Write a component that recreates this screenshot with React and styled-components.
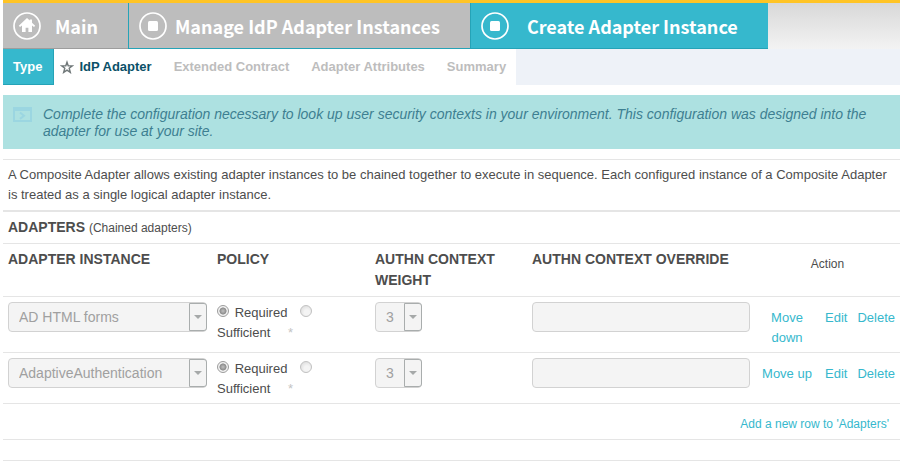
import { useState } from "react";
import styled, { createGlobalStyle } from "styled-components";

const GlobalStyle = createGlobalStyle`
  * {
    box-sizing: border-box;
  }

  body {
    margin: 0;
    background: #fff;
    color: #4d4d4d;
    font-family: "Liberation Sans", Arial, sans-serif;
    font-size: 13px;
    line-height: 20px;
  }

  a {
    color: #36b8cd;
    text-decoration: none;
  }
`;

const Page = styled.div`
  padding: 0 4px 0 3px;
`;

const Header = styled.header`
  border-top: 3px solid #ffc425;
`;

const MainNav = styled.nav`
  display: flex;
  height: 46px;
  background: linear-gradient(#d8d8d8, #f3f3f3);
`;

const MainTab = styled.a`
  display: flex;
  align-items: center;
  gap: ${(p) => p.$gap};
  padding: 0 30px 0 10px;
  border-left: ${(p) => (p.$first ? "0" : "1px solid #25a3b7")};
  border-bottom: 1px solid ${(p) => (p.$first ? "#9d9d9d" : "#25a3b7")};
  background: ${(p) => (p.$active ? "#36b8cd" : "#bdbdbd")};
  color: #fff;
  font-family: "Noto Sans CJK SC", "Open Sans", sans-serif;
  font-size: 18px;
  font-weight: 700;
  white-space: nowrap;

  svg {
    flex: none;
  }
`;

const TaskBar = styled.div`
  display: flex;
  background: #eef2f8;
`;

const TaskNav = styled.nav`
  display: flex;
  align-items: stretch;
  height: 36px;
  padding-right: 10px;
  gap: 22px;
  background: #fff;
  font-weight: 700;
`;

const Task = styled.a`
  display: flex;
  align-items: center;
  gap: 5px;
  color: ${(p) => (p.$current ? "#0a5068" : "#bdbdbd")};
`;

const DoneTask = styled(Task)`
  margin-right: -16px;
  padding: 0 11px 0 10px;
  border-right: 1px solid #25a3b7;
  border-bottom: 1px solid #25a3b7;
  background: #36b8cd;
  color: #fff;
`;

const Notice = styled.div`
  display: flex;
  gap: 11px;
  margin: 10px 0;
  padding: 11px 10px 9px;
  background: #ade1e1;
  color: #3d7f91;
  font-size: 14px;
  font-style: italic;
  line-height: 17px;

  svg {
    flex: none;
    margin-top: 1px;
  }
`;

const Intro = styled.p`
  margin: 0;
  padding: 5px;
  border-top: 1px solid #e5e5e5;
  border-bottom: 2px solid #e5e5e5;
`;

const SectionTitle = styled.h2`
  margin: 0;
  padding: 5px;
  border-bottom: 1px solid #e5e5e5;
  font-size: 14px;
  line-height: 20px;

  small {
    font-size: 12px;
    font-weight: 400;
  }
`;

const Table = styled.table`
  width: 100%;
  border-collapse: collapse;
  table-layout: fixed;
`;

const Row = styled.tr`
  border-bottom: 1px solid #e5e5e5;
`;

const HeadCell = styled.th`
  width: ${(p) => p.$width};
  padding: 5px;
  font-size: 14px;
  line-height: 21px;
  text-align: left;
  vertical-align: top;
`;

const ActionHead = styled(HeadCell)`
  padding-top: 10px;
  font-size: 12px;
  font-weight: 400;
  text-align: center;
`;

const Cell = styled.td`
  padding: 5px;
  vertical-align: top;
`;

const ActionCell = styled(Cell)`
  padding: 11px 5px 4px 0;
`;

const Actions = styled.div`
  display: flex;
  gap: 10px;
  text-align: center;

  a:first-child {
    flex: 1;
    padding-left: 4px;
  }
`;

const SelectBox = styled.span`
  display: block;
  position: relative;
  width: ${(p) => p.$width};
`;

const Select = styled.select`
  display: block;
  appearance: none;
  width: 100%;
  height: 30px;
  padding: 0 18px 0 10px;
  border: 1px solid #d2d2d2;
  border-radius: 4px;
  background: #f4f4f4;
  color: #a0a0a0;
  font: inherit;
  font-size: 14px;
  opacity: 1;
`;

const SelectArrow = styled.span`
  display: flex;
  position: absolute;
  top: 1px;
  right: 0;
  bottom: 1px;
  width: 18px;
  align-items: center;
  justify-content: center;
  border: 1px solid #a9adad;
  border-radius: 0 3px 3px 0;
  background: #f4f4f4;
  pointer-events: none;
`;

const TextInput = styled.input`
  display: block;
  width: 100%;
  height: 30px;
  padding: 0 10px;
  border: 1px solid #d2d2d2;
  border-radius: 4px;
  background: #f4f4f4;
  font: inherit;
`;

const Radio = styled.input`
  appearance: none;
  width: 12px;
  height: 12px;
  margin: 0 2px 0 0;
  border: 1px solid #c2c2c2;
  border-radius: 50%;
  background: radial-gradient(circle at 60% 65%, #f4f4f4 30%, #d6d6d6);

  &:checked {
    border-color: #9c9c9c;
    background: radial-gradient(circle, #b4b4b4 10%, #8c8c8c 45%, #f2f2f2 55%);
  }
`;

const RadioLabel = styled.label`
  margin-right: 9px;
`;

const RequiredMark = styled.span`
  margin-left: 5px;
  color: #c4c4c4;
`;

const PolicyCell = styled(Cell)`
  padding: 6px 5px 4px;
`;

const AddRow = styled.div`
  padding: 10px 11px 5px;
  border-bottom: 1px solid #e5e5e5;
  font-size: 12px;
  text-align: right;
`;

const Footer = styled.div`
  height: 21px;
  border-bottom: 1px solid #e5e5e5;
`;

const HomeIcon = () => (
  <svg width="28" height="28" viewBox="0 0 28 28" aria-hidden="true">
    <circle cx="14" cy="14" r="13" fill="none" stroke="#fff" strokeWidth="1.7" />
    <path d="M14 6 5.8 13.8 7 15l2-1.4V20h3.6v-4.2h2.8V20H19v-6.4l2 1.4 1.2-1.2-3.2-3V7.4h-2.2v1.2z" fill="#fff" />
  </svg>
);

const StopIcon = () => (
  <svg width="28" height="28" viewBox="0 0 28 28" aria-hidden="true">
    <circle cx="14" cy="14" r="13" fill="none" stroke="#fff" strokeWidth="1.7" />
    <rect x="9" y="9" width="10" height="10" rx="1.5" fill="#fff" />
  </svg>
);

const StarIcon = () => (
  <svg width="14" height="14" viewBox="0 0 14 14" aria-hidden="true">
    <path d="M7 2.2 8.2 5.8l4.2.1-3.2 2.4 1.1 4L7 10.1l-3.3 2.2 1.1-4-3.2-2.4 4.2-.1z" fill="none" stroke="#6f7778" strokeWidth="1.4" />
  </svg>
);

const WindowIcon = () => (
  <svg width="19" height="15" viewBox="0 0 19 15" aria-hidden="true">
    <path d="M1 1h17v13H1zM1 3h17" fill="none" stroke="#9bd6e1" strokeWidth="2" />
    <path d="m7 5.5 4 3.2-4 3.2" fill="none" stroke="#9bd6e1" strokeWidth="2" />
  </svg>
);

const Caret = () => (
  <svg width="8" height="4" viewBox="0 0 8 4" aria-hidden="true">
    <path d="M0 0h8L4 4z" fill="#a6a9a9" />
  </svg>
);

const Dropdown = ({ label, value, width }) => (
  <SelectBox $width={width}>
    <Select aria-label={label} defaultValue={value} disabled>
      <option>{value}</option>
    </Select>
    <SelectArrow>
      <Caret />
    </SelectArrow>
  </SelectBox>
);

const initialAdapters = [
  { id: "forms", name: "AD HTML forms", weight: "3", move: "Move down" },
  { id: "adaptive", name: "AdaptiveAuthentication", weight: "3", move: "Move up" },
];

const AdapterRow = ({ adapter }) => {
  const { id, name, weight, move } = adapter;

  return (
    <Row>
      <Cell>
        <Dropdown label="Adapter instance" value={name} width="199px" />
      </Cell>
      <PolicyCell>
        <Radio type="radio" id={`${id}-required`} name={`${id}-policy`} defaultChecked disabled />{" "}
        <RadioLabel htmlFor={`${id}-required`}>Required</RadioLabel>{" "}
        <Radio type="radio" id={`${id}-sufficient`} name={`${id}-policy`} disabled />{" "}
        <RadioLabel htmlFor={`${id}-sufficient`}>Sufficient</RadioLabel>{" "}
        <RequiredMark>*</RequiredMark>
      </PolicyCell>
      <Cell>
        <Dropdown label="AuthN context weight" value={weight} width="47px" />
      </Cell>
      <Cell>
        <TextInput type="text" aria-label="AuthN context override" disabled />
      </Cell>
      <ActionCell>
        <Actions>
          <a href="#move">{move}</a>
          <a href="#edit">Edit</a>
          <a href="#delete">Delete</a>
        </Actions>
      </ActionCell>
    </Row>
  );
};

function App() {
  const [adapters] = useState(initialAdapters);

  return (
    <Page>
      <GlobalStyle />
      <Header>
        <MainNav>
          <MainTab href="#main" $first $gap="14px">
            <HomeIcon />
            Main
          </MainTab>
          <MainTab href="#manage" $gap="8px">
            <StopIcon />
            Manage IdP Adapter Instances
          </MainTab>
          <MainTab href="#create" $active $gap="18px">
            <StopIcon />
            Create Adapter Instance
          </MainTab>
        </MainNav>
        <TaskBar>
          <TaskNav>
            <DoneTask href="#type">Type</DoneTask>
            <Task href="#idp-adapter" $current>
              <StarIcon />
              IdP Adapter
            </Task>
            <Task href="#contract">Extended Contract</Task>
            <Task href="#attributes">Adapter Attributes</Task>
            <Task href="#summary">Summary</Task>
          </TaskNav>
        </TaskBar>
      </Header>

      <main>
        <Notice>
          <WindowIcon />
          <span>
            Complete the configuration necessary to look up user security contexts in your environment. This
            configuration was designed into the adapter for use at your site.
          </span>
        </Notice>
        <Intro>
          A Composite Adapter allows existing adapter instances to be chained together to execute in sequence. Each
          configured instance of a Composite Adapter is treated as a single logical adapter instance.
        </Intro>
        <SectionTitle>
          ADAPTERS <small>(Chained adapters)</small>
        </SectionTitle>
        <Table>
          <thead>
            <Row>
              <HeadCell $width="209px">ADAPTER INSTANCE</HeadCell>
              <HeadCell $width="158px">POLICY</HeadCell>
              <HeadCell $width="157px">AUTHN CONTEXT WEIGHT</HeadCell>
              <HeadCell>AUTHN CONTEXT OVERRIDE</HeadCell>
              <ActionHead $width="145px">Action</ActionHead>
            </Row>
          </thead>
          <tbody>
            {adapters.map((adapter) => (
              <AdapterRow key={adapter.id} adapter={adapter} />
            ))}
          </tbody>
        </Table>
        <AddRow>
          <a href="#add">Add a new row to 'Adapters'</a>
        </AddRow>
        <Footer />
      </main>
    </Page>
  );
}

export default App;
